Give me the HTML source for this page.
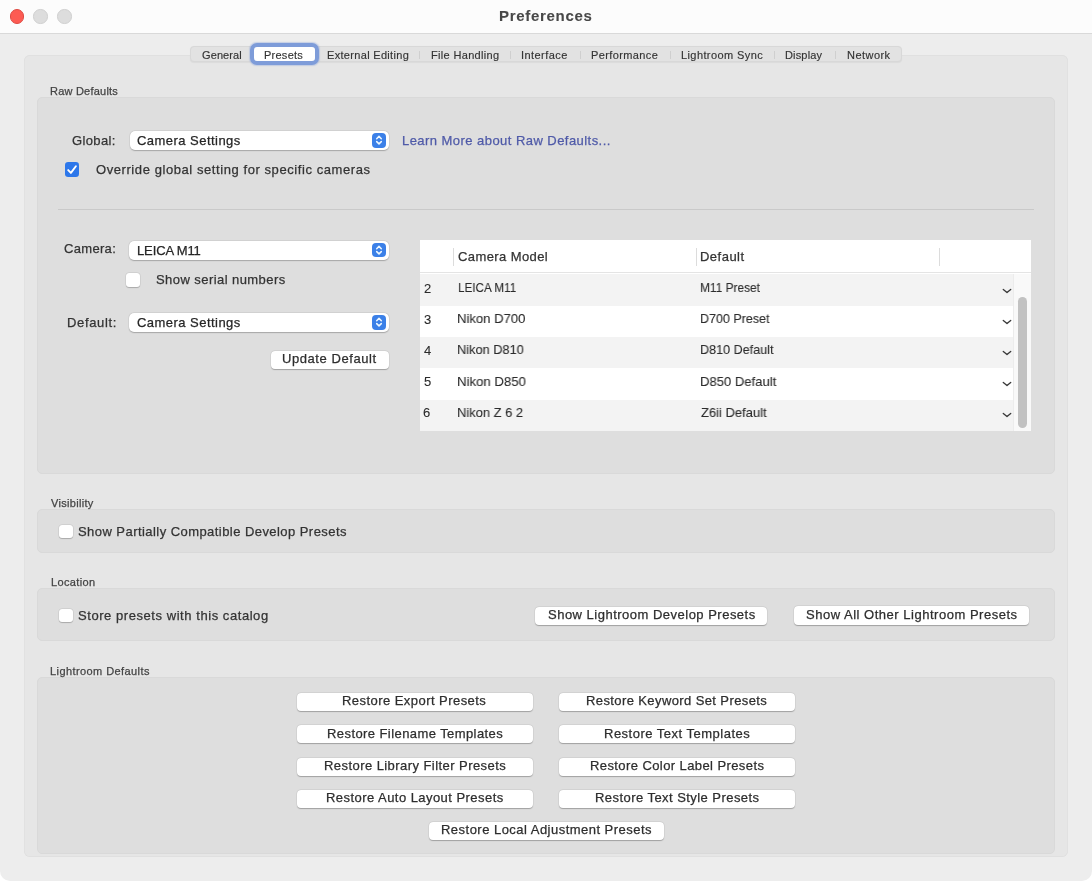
<!DOCTYPE html>
<html><head><meta charset="utf-8"><title>Preferences</title><style>
html,body{margin:0;padding:0;width:1092px;height:882px;overflow:hidden;background:#ffffff}
#win{position:absolute;left:0;top:0;width:1092px;height:880.5px;background:#ededed;border-radius:0 0 10px 10px;overflow:hidden}
.t{position:absolute;height:0;line-height:0;white-space:nowrap;font-family:'Liberation Sans', sans-serif;will-change:transform}
.btn{position:absolute;background:#fff;border-radius:4px;box-shadow:0 0.6px 1px rgba(0,0,0,0.26),0 0 0 0.5px rgba(0,0,0,0.05);box-sizing:border-box}
.pop{position:absolute;background:#fff;border-radius:5px;box-shadow:0 0.6px 1.2px rgba(0,0,0,0.24),0 0 0 0.5px rgba(0,0,0,0.05)}
.arr{position:absolute;width:14px;height:14.5px;background:#3b80e8;border-radius:4px}
.arr svg{display:block}
.cb{position:absolute;width:13.5px;height:13.5px;background:#fff;border-radius:3px;box-shadow:0 0.5px 1px rgba(0,0,0,0.2),0 0 0 0.5px rgba(0,0,0,0.08)}
.cbon{position:absolute;width:14.3px;height:14.8px;background:#2d77ea;border-radius:3.2px}
.cbon svg{display:block}
</style></head>
<body><div id="win">
<div style="position:absolute;left:0px;top:0px;width:1092.00px;height:33.00px;background:#fcfcfc"></div>
<div style="position:absolute;left:0px;top:33px;width:1092.00px;height:1.00px;background:#d9d9d9"></div>
<div style="position:absolute;left:24.2px;top:54.8px;width:1043.60px;height:802.70px;background:#e6e6e6;box-shadow:inset 0 0 0 0.7px #dedede;border-radius:6px"></div>
<div style="position:absolute;left:189.5px;top:46.2px;width:712.50px;height:16.20px;background:#e2e2e2;border:1px solid #d8d8d8;box-sizing:border-box;border-radius:4px;box-shadow:0 0.5px 1px rgba(0,0,0,0.05)"></div>
<div style="position:absolute;left:419.2px;top:50.5px;width:1.00px;height:8.00px;background:#cfcfcf"></div>
<div style="position:absolute;left:510.0px;top:50.5px;width:1.00px;height:8.00px;background:#cfcfcf"></div>
<div style="position:absolute;left:579.9px;top:50.5px;width:1.00px;height:8.00px;background:#cfcfcf"></div>
<div style="position:absolute;left:669.5px;top:50.5px;width:1.00px;height:8.00px;background:#cfcfcf"></div>
<div style="position:absolute;left:773.9px;top:50.5px;width:1.00px;height:8.00px;background:#cfcfcf"></div>
<div style="position:absolute;left:834.9px;top:50.5px;width:1.00px;height:8.00px;background:#cfcfcf"></div>
<div style="position:absolute;left:250.2px;top:42.6px;width:68.40px;height:22.40px;background:#fff;border:4px solid #7e9cd9;box-sizing:border-box;border-radius:7px;box-shadow:0 0 1px 0.5px rgba(126,156,217,0.35)"></div>
<div style="position:absolute;left:9.5px;top:9.3px;width:14.40px;height:14.40px;background:#fd5b53;border-radius:50%;border:0.7px solid #de4a42;box-sizing:border-box"></div>
<div style="position:absolute;left:33.3px;top:9.3px;width:14.40px;height:14.40px;background:#dddddd;border-radius:50%;border:0.7px solid #d0d0d0;box-sizing:border-box"></div>
<div style="position:absolute;left:57.39999999999999px;top:9.3px;width:14.40px;height:14.40px;background:#dddddd;border-radius:50%;border:0.7px solid #d0d0d0;box-sizing:border-box"></div>
<div style="position:absolute;left:37.2px;top:97px;width:1017.40px;height:376.70px;background:#dedede;border:1px solid #d9d9d9;box-sizing:border-box;border-radius:5px"></div>
<div style="position:absolute;left:37.2px;top:509px;width:1017.40px;height:43.50px;background:#dedede;border:1px solid #d9d9d9;box-sizing:border-box;border-radius:5px"></div>
<div style="position:absolute;left:37.2px;top:587.7px;width:1017.40px;height:53.30px;background:#dedede;border:1px solid #d9d9d9;box-sizing:border-box;border-radius:5px"></div>
<div style="position:absolute;left:37.2px;top:677px;width:1017.40px;height:177.00px;background:#dedede;border:1px solid #d9d9d9;box-sizing:border-box;border-radius:5px"></div>
<div style="position:absolute;left:57.5px;top:208.5px;width:976.50px;height:1.00px;background:#c9c9c9"></div>
<div class="pop" style="left:129.9px;top:131.2px;width:258.80px;height:18.60px"></div>
<div class="arr" style="left:372.40px;top:133.20px"><svg width="14" height="14" viewBox="0 0 14 14"><path d="M4.7 5.7 L7 3.4 L9.3 5.7 M4.7 8.6 L7 10.9 L9.3 8.6" fill="none" stroke="#eef8ff" stroke-width="1.5" stroke-linecap="round" stroke-linejoin="round"/></svg></div>
<div class="pop" style="left:129.4px;top:240.8px;width:259.30px;height:19.20px"></div>
<div class="arr" style="left:372.40px;top:242.80px"><svg width="14" height="14" viewBox="0 0 14 14"><path d="M4.7 5.7 L7 3.4 L9.3 5.7 M4.7 8.6 L7 10.9 L9.3 8.6" fill="none" stroke="#eef8ff" stroke-width="1.5" stroke-linecap="round" stroke-linejoin="round"/></svg></div>
<div class="pop" style="left:129px;top:313.2px;width:259.70px;height:18.80px"></div>
<div class="arr" style="left:372.40px;top:315.20px"><svg width="14" height="14" viewBox="0 0 14 14"><path d="M4.7 5.7 L7 3.4 L9.3 5.7 M4.7 8.6 L7 10.9 L9.3 8.6" fill="none" stroke="#eef8ff" stroke-width="1.5" stroke-linecap="round" stroke-linejoin="round"/></svg></div>
<div class="cbon" style="left:64.7px;top:162.2px"><svg width="14.3" height="14.8" viewBox="0 0 14.3 14.8"><path d="M3.2 8.1 L5.9 10.9 L10.9 4.3" fill="none" stroke="#fff" stroke-width="1.9" stroke-linecap="round" stroke-linejoin="round"/></svg></div>
<div class="cb" style="left:126.3px;top:273.4px"></div>
<div class="btn" style="left:270.9px;top:350.9px;width:117.90px;height:18.30px"></div>
<div style="position:absolute;left:420px;top:239.5px;width:610.70px;height:191.70px;background:#fff"></div>
<div style="position:absolute;left:420px;top:272px;width:610.70px;height:1.00px;background:#e4e4e4"></div>
<div style="position:absolute;left:1013px;top:273.5px;width:17.70px;height:157.70px;background:#f9f9f9"></div>
<div style="position:absolute;left:1012.6px;top:273.5px;width:0.80px;height:157.70px;background:#ececec"></div>
<div style="position:absolute;left:452.9px;top:247.7px;width:1.00px;height:18.00px;background:#dcdcdc"></div>
<div style="position:absolute;left:695.5px;top:247.7px;width:1.00px;height:18.00px;background:#dcdcdc"></div>
<div style="position:absolute;left:938.5px;top:247.7px;width:1.00px;height:18.00px;background:#dcdcdc"></div>
<div style="position:absolute;left:420px;top:273.5px;width:592.60px;height:32.60px;background:#f3f3f3"></div>
<div style="position:absolute;left:420px;top:337.3px;width:592.60px;height:31.10px;background:#f3f3f3"></div>
<div style="position:absolute;left:420px;top:399.5px;width:592.60px;height:31.20px;background:#f3f3f3"></div>
<div style="position:absolute;left:1018.1px;top:297.2px;width:8.80px;height:130.40px;background:#c2c2c2;border-radius:4.5px"></div>
<svg style="position:absolute;left:1002.4px;top:288.0px" width="10" height="6" viewBox="0 0 10 6"><path d="M1.3 1.5 L5 4.5 L8.7 1.5" fill="none" stroke="#383838" stroke-width="1.35" stroke-linecap="round" stroke-linejoin="round"/></svg>
<svg style="position:absolute;left:1002.4px;top:319.1px" width="10" height="6" viewBox="0 0 10 6"><path d="M1.3 1.5 L5 4.5 L8.7 1.5" fill="none" stroke="#383838" stroke-width="1.35" stroke-linecap="round" stroke-linejoin="round"/></svg>
<svg style="position:absolute;left:1002.4px;top:350.1px" width="10" height="6" viewBox="0 0 10 6"><path d="M1.3 1.5 L5 4.5 L8.7 1.5" fill="none" stroke="#383838" stroke-width="1.35" stroke-linecap="round" stroke-linejoin="round"/></svg>
<svg style="position:absolute;left:1002.4px;top:381.1px" width="10" height="6" viewBox="0 0 10 6"><path d="M1.3 1.5 L5 4.5 L8.7 1.5" fill="none" stroke="#383838" stroke-width="1.35" stroke-linecap="round" stroke-linejoin="round"/></svg>
<svg style="position:absolute;left:1002.4px;top:412.2px" width="10" height="6" viewBox="0 0 10 6"><path d="M1.3 1.5 L5 4.5 L8.7 1.5" fill="none" stroke="#383838" stroke-width="1.35" stroke-linecap="round" stroke-linejoin="round"/></svg>
<div class="cb" style="left:59.3px;top:524.5px"></div>
<div class="cb" style="left:59.3px;top:608.5px"></div>
<div class="btn" style="left:534.9px;top:606.7px;width:232.50px;height:17.90px"></div>
<div class="btn" style="left:794.1px;top:606.2px;width:235.10px;height:18.40px"></div>
<div class="btn" style="left:296.9px;top:692.7px;width:235.80px;height:18.40px"></div>
<div class="btn" style="left:559.2px;top:692.7px;width:235.80px;height:18.40px"></div>
<div class="btn" style="left:296.9px;top:725.1px;width:235.80px;height:18.40px"></div>
<div class="btn" style="left:559.2px;top:725.1px;width:235.80px;height:18.40px"></div>
<div class="btn" style="left:296.9px;top:757.5px;width:235.80px;height:18.40px"></div>
<div class="btn" style="left:559.2px;top:757.5px;width:235.80px;height:18.40px"></div>
<div class="btn" style="left:296.9px;top:789.9000000000001px;width:235.80px;height:18.40px"></div>
<div class="btn" style="left:559.2px;top:789.9000000000001px;width:235.80px;height:18.40px"></div>
<div class="btn" style="left:428.5px;top:822.2px;width:235.90px;height:17.80px"></div>
<div class="t" style="left:498.67px;top:16.45px;font-size:15px;font-weight:700;color:#484848;letter-spacing:0.700px;-webkit-text-stroke:0.1px currentColor">Preferences</div>
<div class="t" style="left:201.59px;top:55.07px;font-size:11px;font-weight:400;color:#333333;letter-spacing:0.105px;-webkit-text-stroke:0.15px currentColor">General</div>
<div class="t" style="left:264.38px;top:55.07px;font-size:11px;font-weight:400;color:#333333;letter-spacing:0.252px;-webkit-text-stroke:0.15px currentColor">Presets</div>
<div class="t" style="left:327.14px;top:55.07px;font-size:11px;font-weight:400;color:#333333;letter-spacing:0.318px;-webkit-text-stroke:0.15px currentColor">External Editing</div>
<div class="t" style="left:430.80px;top:55.07px;font-size:11px;font-weight:400;color:#333333;letter-spacing:0.331px;-webkit-text-stroke:0.15px currentColor">File Handling</div>
<div class="t" style="left:521.49px;top:55.07px;font-size:11px;font-weight:400;color:#333333;letter-spacing:0.441px;-webkit-text-stroke:0.15px currentColor">Interface</div>
<div class="t" style="left:591.30px;top:55.07px;font-size:11px;font-weight:400;color:#333333;letter-spacing:0.388px;-webkit-text-stroke:0.15px currentColor">Performance</div>
<div class="t" style="left:680.88px;top:55.07px;font-size:11px;font-weight:400;color:#333333;letter-spacing:0.404px;-webkit-text-stroke:0.15px currentColor">Lightroom Sync</div>
<div class="t" style="left:785.38px;top:55.07px;font-size:11px;font-weight:400;color:#333333;letter-spacing:0.156px;-webkit-text-stroke:0.15px currentColor">Display</div>
<div class="t" style="left:846.55px;top:55.07px;font-size:11px;font-weight:400;color:#333333;letter-spacing:0.461px;-webkit-text-stroke:0.15px currentColor">Network</div>
<div class="t" style="left:50.39px;top:91.37px;font-size:11px;font-weight:400;color:#444444;letter-spacing:0.222px;-webkit-text-stroke:0.25px currentColor">Raw Defaults</div>
<div class="t" style="left:51.48px;top:502.67px;font-size:11px;font-weight:400;color:#444444;letter-spacing:0.306px;-webkit-text-stroke:0.25px currentColor">Visibility</div>
<div class="t" style="left:50.61px;top:581.67px;font-size:11px;font-weight:400;color:#444444;letter-spacing:0.357px;-webkit-text-stroke:0.25px currentColor">Location</div>
<div class="t" style="left:50.33px;top:671.37px;font-size:11px;font-weight:400;color:#444444;letter-spacing:0.418px;-webkit-text-stroke:0.25px currentColor">Lightroom Defaults</div>
<div class="t" style="left:72.44px;top:140.71px;font-size:13px;font-weight:400;color:#333333;letter-spacing:0.373px;-webkit-text-stroke:0.25px currentColor">Global:</div>
<div class="t" style="left:136.62px;top:140.71px;font-size:13px;font-weight:400;color:#262626;letter-spacing:0.463px;-webkit-text-stroke:0.25px currentColor">Camera Settings</div>
<div class="t" style="left:402.19px;top:140.51px;font-size:13px;font-weight:400;color:#4f5aa8;letter-spacing:0.450px;-webkit-text-stroke:0.25px currentColor">Learn More about Raw Defaults...</div>
<div class="t" style="left:95.53px;top:170.01px;font-size:13px;font-weight:400;color:#333333;letter-spacing:0.574px;-webkit-text-stroke:0.25px currentColor">Override global setting for specific cameras</div>
<div class="t" style="left:63.86px;top:248.91px;font-size:13px;font-weight:400;color:#333333;letter-spacing:0.318px;-webkit-text-stroke:0.25px currentColor">Camera:</div>
<div class="t" style="left:136.86px;top:250.81px;font-size:13px;font-weight:400;color:#262626;letter-spacing:-0.122px;-webkit-text-stroke:0.25px currentColor">LEICA M11</div>
<div class="t" style="left:155.79px;top:280.11px;font-size:13px;font-weight:400;color:#333333;letter-spacing:0.432px;-webkit-text-stroke:0.25px currentColor">Show serial numbers</div>
<div class="t" style="left:66.80px;top:322.71px;font-size:13px;font-weight:400;color:#333333;letter-spacing:0.646px;-webkit-text-stroke:0.25px currentColor">Default:</div>
<div class="t" style="left:136.62px;top:322.71px;font-size:13px;font-weight:400;color:#262626;letter-spacing:0.463px;-webkit-text-stroke:0.25px currentColor">Camera Settings</div>
<div class="t" style="left:282.30px;top:359.41px;font-size:13px;font-weight:400;color:#2e2e2e;letter-spacing:0.572px;-webkit-text-stroke:0.25px currentColor">Update Default</div>
<div class="t" style="left:457.54px;top:257.21px;font-size:13px;font-weight:400;color:#333333;letter-spacing:0.405px;-webkit-text-stroke:0.25px currentColor">Camera Model</div>
<div class="t" style="left:700.30px;top:256.91px;font-size:13px;font-weight:400;color:#333333;letter-spacing:0.486px;-webkit-text-stroke:0.25px currentColor">Default</div>
<div class="t" style="left:423.74px;top:288.51px;font-size:13px;font-weight:400;color:#2b2b2b;letter-spacing:0.420px;-webkit-text-stroke:0.1px currentColor">2</div>
<div class="t" style="left:457.57px;top:288.35px;font-size:13.5px;font-weight:400;color:#2b2b2b;letter-spacing:0.000px;-webkit-text-stroke:0.1px currentColor;transform:scaleX(0.8657);transform-origin:0 0">LEICA M11</div>
<div class="t" style="left:700.18px;top:288.35px;font-size:13.5px;font-weight:400;color:#2b2b2b;letter-spacing:0.000px;-webkit-text-stroke:0.1px currentColor;transform:scaleX(0.8821);transform-origin:0 0">M11 Preset</div>
<div class="t" style="left:424.08px;top:319.56px;font-size:13px;font-weight:400;color:#2b2b2b;letter-spacing:0.420px;-webkit-text-stroke:0.1px currentColor">3</div>
<div class="t" style="left:457.48px;top:319.40px;font-size:13.5px;font-weight:400;color:#2b2b2b;letter-spacing:0.000px;-webkit-text-stroke:0.1px currentColor;transform:scaleX(0.9695);transform-origin:0 0">Nikon D700</div>
<div class="t" style="left:700.14px;top:319.40px;font-size:13.5px;font-weight:400;color:#2b2b2b;letter-spacing:0.000px;-webkit-text-stroke:0.1px currentColor;transform:scaleX(0.9262);transform-origin:0 0">D700 Preset</div>
<div class="t" style="left:423.50px;top:350.61px;font-size:13px;font-weight:400;color:#2b2b2b;letter-spacing:0.420px;-webkit-text-stroke:0.1px currentColor">4</div>
<div class="t" style="left:457.48px;top:350.45px;font-size:13.5px;font-weight:400;color:#2b2b2b;letter-spacing:0.000px;-webkit-text-stroke:0.1px currentColor;transform:scaleX(0.9471);transform-origin:0 0">Nikon D810</div>
<div class="t" style="left:700.14px;top:350.45px;font-size:13.5px;font-weight:400;color:#2b2b2b;letter-spacing:0.000px;-webkit-text-stroke:0.1px currentColor;transform:scaleX(0.9332);transform-origin:0 0">D810 Default</div>
<div class="t" style="left:423.96px;top:381.66px;font-size:13px;font-weight:400;color:#2b2b2b;letter-spacing:0.420px;-webkit-text-stroke:0.1px currentColor">5</div>
<div class="t" style="left:457.47px;top:381.50px;font-size:13.5px;font-weight:400;color:#2b2b2b;letter-spacing:0.000px;-webkit-text-stroke:0.1px currentColor;transform:scaleX(0.9771);transform-origin:0 0">Nikon D850</div>
<div class="t" style="left:700.13px;top:381.50px;font-size:13.5px;font-weight:400;color:#2b2b2b;letter-spacing:0.000px;-webkit-text-stroke:0.1px currentColor;transform:scaleX(0.9684);transform-origin:0 0">D850 Default</div>
<div class="t" style="left:423.19px;top:412.71px;font-size:13px;font-weight:400;color:#2b2b2b;letter-spacing:0.420px;-webkit-text-stroke:0.1px currentColor">6</div>
<div class="t" style="left:457.47px;top:412.55px;font-size:13.5px;font-weight:400;color:#2b2b2b;letter-spacing:0.000px;-webkit-text-stroke:0.1px currentColor;transform:scaleX(0.9574);transform-origin:0 0">Nikon Z 6 2</div>
<div class="t" style="left:701.13px;top:412.55px;font-size:13.5px;font-weight:400;color:#2b2b2b;letter-spacing:0.000px;-webkit-text-stroke:0.1px currentColor;transform:scaleX(0.9610);transform-origin:0 0">Z6ii Default</div>
<div class="t" style="left:77.93px;top:531.71px;font-size:13px;font-weight:400;color:#333333;letter-spacing:0.444px;-webkit-text-stroke:0.25px currentColor">Show Partially Compatible Develop Presets</div>
<div class="t" style="left:77.93px;top:615.71px;font-size:13px;font-weight:400;color:#333333;letter-spacing:0.557px;-webkit-text-stroke:0.25px currentColor">Store presets with this catalog</div>
<div class="t" style="left:547.55px;top:615.21px;font-size:13px;font-weight:400;color:#2e2e2e;letter-spacing:0.492px;-webkit-text-stroke:0.25px currentColor">Show Lightroom Develop Presets</div>
<div class="t" style="left:806.13px;top:615.21px;font-size:13px;font-weight:400;color:#2e2e2e;letter-spacing:0.516px;-webkit-text-stroke:0.25px currentColor">Show All Other Lightroom Presets</div>
<div class="t" style="left:342.38px;top:701.31px;font-size:13px;font-weight:400;color:#2e2e2e;letter-spacing:0.450px;-webkit-text-stroke:0.25px currentColor">Restore Export Presets</div>
<div class="t" style="left:586.08px;top:701.31px;font-size:13px;font-weight:400;color:#2e2e2e;letter-spacing:0.395px;-webkit-text-stroke:0.25px currentColor">Restore Keyword Set Presets</div>
<div class="t" style="left:326.58px;top:733.51px;font-size:13px;font-weight:400;color:#2e2e2e;letter-spacing:0.421px;-webkit-text-stroke:0.25px currentColor">Restore Filename Templates</div>
<div class="t" style="left:603.86px;top:733.51px;font-size:13px;font-weight:400;color:#2e2e2e;letter-spacing:0.496px;-webkit-text-stroke:0.25px currentColor">Restore Text Templates</div>
<div class="t" style="left:323.86px;top:765.71px;font-size:13px;font-weight:400;color:#2e2e2e;letter-spacing:0.437px;-webkit-text-stroke:0.25px currentColor">Restore Library Filter Presets</div>
<div class="t" style="left:589.58px;top:765.71px;font-size:13px;font-weight:400;color:#2e2e2e;letter-spacing:0.408px;-webkit-text-stroke:0.25px currentColor">Restore Color Label Presets</div>
<div class="t" style="left:326.08px;top:797.91px;font-size:13px;font-weight:400;color:#2e2e2e;letter-spacing:0.451px;-webkit-text-stroke:0.25px currentColor">Restore Auto Layout Presets</div>
<div class="t" style="left:594.58px;top:797.91px;font-size:13px;font-weight:400;color:#2e2e2e;letter-spacing:0.447px;-webkit-text-stroke:0.25px currentColor">Restore Text Style Presets</div>
<div class="t" style="left:440.58px;top:830.11px;font-size:13px;font-weight:400;color:#2e2e2e;letter-spacing:0.475px;-webkit-text-stroke:0.25px currentColor">Restore Local Adjustment Presets</div>
</div></body></html>
